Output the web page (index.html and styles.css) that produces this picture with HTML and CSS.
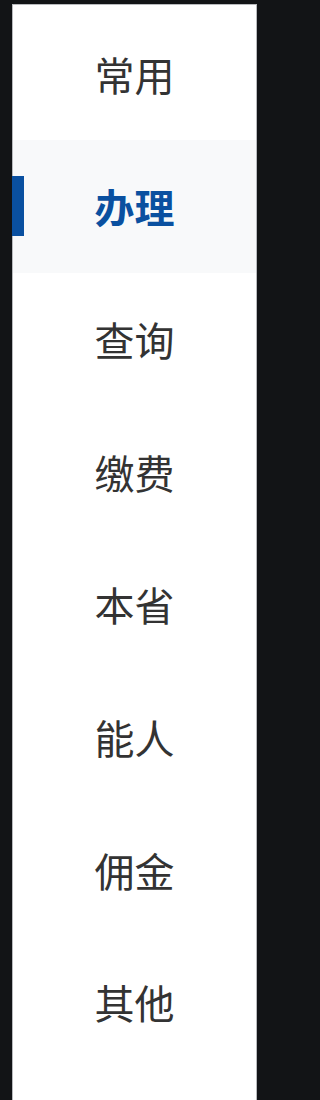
FILE: index.html
```html
<!DOCTYPE html>
<html lang="zh-CN">
<head>
<meta charset="utf-8">
<link rel="stylesheet" href="styles.css">
</head>
<body>
<nav class="sidebar">
  <div class="item">常用</div>
  <div class="item active">办理</div>
  <div class="item">查询</div>
  <div class="item">缴费</div>
  <div class="item">本省</div>
  <div class="item">能人</div>
  <div class="item">佣金</div>
  <div class="item">其他</div>
</nav>
</body>
</html>
```
FILE: styles.css
```css
html, body {
  margin: 0;
  padding: 0;
  background: #121416;
  height: 100%;
}
body {
  padding-top: 4px;
  box-sizing: border-box;
}
.sidebar {
  margin-left: 12px;
  width: 245px;
  box-sizing: border-box;
  background: #ffffff;
  border: 1px solid #b8babd;
  border-bottom: none;
  padding-top: 2.3px;
  min-height: 1096px;
  display: flex;
  flex-direction: column;
}
.item {
  position: relative;
  flex: 0 0 132.7px;
  height: 132.7px;
  display: flex;
  align-items: center;
  justify-content: center;
  font-family: "Noto Sans CJK SC", "Noto Sans", sans-serif;
  font-size: 40px;
  color: #333333;
  letter-spacing: 0;
}
.item.active {
  background: #f8f9fa;
  color: #0a50a0;
  font-weight: 700;
}
.item.active::before {
  content: "";
  position: absolute;
  left: -1px;
  top: 36px;
  width: 12px;
  height: 60px;
  background: #0a50a0;
}
```
